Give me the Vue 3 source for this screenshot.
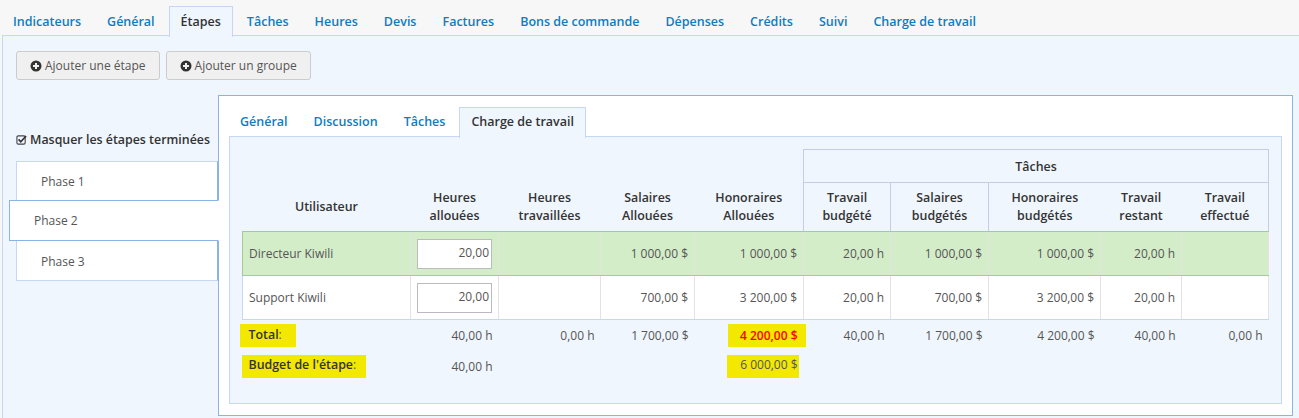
<template>
  <div class="page">
    <ul class="tabs main-tabs">
      <li v-for="t in mainTabs" :key="t" :class="{ active: t === 'Étapes' }">{{ t }}</li>
    </ul>

    <div class="main-panel">
      <div class="actions">
        <button class="btn" v-for="b in buttons" :key="b">
          <svg class="plus" viewBox="0 0 12 12" width="12" height="12">
            <circle cx="6" cy="6" r="5.5" fill="#333" />
            <path d="M6 3v6M3 6h6" stroke="#f0f0f0" stroke-width="2" />
          </svg>
          {{ b }}
        </button>
      </div>

      <div class="workspace">
        <div class="sidebar">
          <label class="hide-done">
            <svg class="check" viewBox="0 0 12 12" width="11" height="11">
              <rect x="1" y="2" width="9" height="9" rx="1.5" fill="none" stroke="#444" stroke-width="1.2" />
              <path d="M2.8 5.8l2.4 2.6L11 2.2" fill="none" stroke="#333" stroke-width="1.8" />
            </svg>
            Masquer les étapes terminées
          </label>
          <div
            v-for="p in phases"
            :key="p"
            class="phase"
            :class="{ active: p === 'Phase 2' }"
          >{{ p }}</div>
        </div>

        <div class="detail">
          <ul class="tabs sub-tabs">
            <li v-for="t in subTabs" :key="t" :class="{ active: t === 'Charge de travail' }">{{ t }}</li>
          </ul>

          <div class="sub-panel">
            <table>
              <colgroup>
                <col v-for="w in colWidths" :key="w.id" :style="{ width: w.px + 'px' }" />
              </colgroup>
              <thead>
                <tr class="group-row">
                  <th colspan="5" class="blank"></th>
                  <th colspan="5" class="group">Tâches</th>
                </tr>
                <tr class="head-row">
                  <th>Utilisateur</th>
                  <th>Heures<br />allouées</th>
                  <th>Heures<br />travaillées</th>
                  <th>Salaires<br />Allouées</th>
                  <th>Honoraires<br />Allouées</th>
                  <th class="line-l">Travail<br />budgété</th>
                  <th class="line-l">Salaires<br />budgétés</th>
                  <th class="line-l">Honoraires<br />budgétés</th>
                  <th>Travail<br />restant</th>
                  <th class="line-r">Travail<br />effectué</th>
                </tr>
              </thead>
              <tbody>
                <tr v-for="r in rows" :key="r.name" :class="{ selected: r.selected }">
                  <td class="name">{{ r.name }}</td>
                  <td class="input-cell"><input class="hours" :value="r.hours" /></td>
                  <td></td>
                  <td>{{ r.salary }}</td>
                  <td>{{ r.fees }}</td>
                  <td>{{ r.budgetHours }}</td>
                  <td>{{ r.budgetSalary }}</td>
                  <td>{{ r.budgetFees }}</td>
                  <td>{{ r.left }}</td>
                  <td></td>
                </tr>
              </tbody>
              <tfoot>
                <tr class="total-row">
                  <td class="name"><span class="mark mark-total"><b>Total</b>:</span></td>
                  <td>40,00 h</td>
                  <td>0,00 h</td>
                  <td>1 700,00 $</td>
                  <td><span class="mark mark-red">4 200,00 $</span></td>
                  <td>40,00 h</td>
                  <td>1 700,00 $</td>
                  <td>4 200,00 $</td>
                  <td>40,00 h</td>
                  <td>0,00 h</td>
                </tr>
                <tr class="budget-row">
                  <td class="name"><span class="mark mark-budget"><b>Budget de l'étape</b>:</span></td>
                  <td>40,00 h</td>
                  <td></td>
                  <td></td>
                  <td><span class="mark mark-amount">6 000,00 $</span></td>
                  <td colspan="5"></td>
                </tr>
              </tfoot>
            </table>
          </div>
        </div>
      </div>
    </div>
  </div>
</template>

<script setup>
const mainTabs = ['Indicateurs', 'Général', 'Étapes', 'Tâches', 'Heures', 'Devis', 'Factures', 'Bons de commande', 'Dépenses', 'Crédits', 'Suivi', 'Charge de travail']
const subTabs = ['Général', 'Discussion', 'Tâches', 'Charge de travail']
const buttons = ['Ajouter une étape', 'Ajouter un groupe']
const phases = ['Phase 1', 'Phase 2', 'Phase 3']

const colWidths = [168, 88, 102, 94, 109, 87, 98, 112, 81, 87].map((px, id) => ({ id, px }))

const rows = [
  { name: 'Directeur Kiwili', hours: '20,00', salary: '1 000,00 $', fees: '1 000,00 $', budgetHours: '20,00 h', budgetSalary: '1 000,00 $', budgetFees: '1 000,00 $', left: '20,00 h', selected: true },
  { name: 'Support Kiwili', hours: '20,00', salary: '700,00 $', fees: '3 200,00 $', budgetHours: '20,00 h', budgetSalary: '700,00 $', budgetFees: '3 200,00 $', left: '20,00 h', selected: false }
]
</script>

<style>
html, body {
  margin: 0;
  background: #f7f7f7;
  overflow: hidden;
}
</style>

<style scoped>
.page {
  height: 418px;
  overflow: hidden;
  font-family: "Open Sans", "Noto Sans", sans-serif;
  font-size: 12px;
  color: #555;
}

.tabs {
  display: flex;
  gap: 2px;
  list-style: none;
  margin: 0;
  font-size: 12.5px;
  font-weight: 600;
  color: #0f7cc0;
}
.tabs li {
  height: 29px;
  line-height: 29px;
  padding: 0 11px;
  border: 1px solid transparent;
  border-bottom: 0;
  white-space: nowrap;
}
.tabs li.active {
  color: #333;
  background: #eff6fe;
  border-color: #c6d6f6;
  height: 30px;
  margin-bottom: -1px;
  position: relative;
}
.main-tabs {
  padding: 6px 0 0 1px;
  height: 29px;
}
.sub-tabs {
  padding: 11px 0 0 9px;
  height: 29px;
}
.sub-tabs li {
  line-height: 27px;
}

.main-panel {
  margin-left: 2px;
  border-top: 1px solid #c6d6f6;
  border-left: 1px solid #c6d6f6;
  background: #eff6fe;
  padding: 15px 6px 0 13px;
  height: 400px;
}

.actions {
  display: flex;
  gap: 6px;
  height: 29px;
  margin-bottom: 15px;
}
.btn {
  display: flex;
  align-items: center;
  gap: 3px;
  height: 29px;
  padding: 0 13px;
  font: 12px "Open Sans", "Noto Sans", sans-serif;
  color: #555;
  background: #f0f0f0;
  border: 1px solid #ccc;
  border-radius: 3px;
}

.workspace {
  display: flex;
}
.sidebar {
  width: 202px;
  flex: none;
  padding-top: 34px;
}
.hide-done {
  display: flex;
  align-items: center;
  gap: 3px;
  height: 20px;
  margin-bottom: 12px;
  font-size: 12.4px;
  font-weight: 600;
  color: #333;
  white-space: nowrap;
}
.phase {
  height: 39px;
  line-height: 41px;
  padding-left: 24px;
  background: #fff;
  border: 1px solid #c6d6f6;
  border-right-color: #8ab4e4;
  margin-bottom: -1px;
}
.phase:first-of-type {
  height: 38px;
  line-height: 39px;
}
.phase.active {
  position: relative;
  z-index: 1;
  margin: 0 -1px -1px -7px;
  height: 39px;
  line-height: 39px;
  border-color: #8ab4e4;
  border-right-color: #fff;
}

.detail {
  flex: 1;
  background: #fff;
  border: 1px solid #8ab4e4;
  padding: 0 10px 11px;
  margin-left: 0;
}
.sub-tabs {
  margin: 0 -10px;
}
.sub-panel {
  background: #eff6fe;
  border: 1px solid #c6d6f6;
  padding: 12px 12px 22px;
}

table {
  table-layout: fixed;
  border-collapse: collapse;
  width: 1026px;
}
th {
  font-size: 12.4px;
  font-weight: 600;
  color: #333;
  text-align: center;
  padding: 0 4px;
}
.group-row th {
  height: 32px;
}
.group {
  border: 1px solid #c8cbe2;
}
.head-row th {
  height: 48px;
  line-height: 18px;
  border-bottom: 1px solid #a2cc90;
}
.line-l {
  border-left: 1px solid #c8cbe2;
}
.line-r {
  border-right: 1px solid #c8cbe2;
}

td {
  text-align: right;
  padding: 0 6px;
  white-space: nowrap;
}
td.name {
  text-align: left;
}
tbody td {
  height: 43px;
  background: #fff;
  border: 1px solid #e3e3e3;
  border-bottom-color: #c6d6f6;
}
tbody td:first-child {
  border-left-color: #c6d6f6;
  padding-left: 6px;
}
tbody tr.selected td {
  background: #d4edc9;
  border-top-color: #a2cc90;
  border-bottom-color: #a2cc90;
}
tbody tr.selected td:first-child {
  border-left-color: #a2cc90;
}
.hours {
  display: block;
  box-sizing: border-box;
  width: 75px;
  height: 30px;
  margin-left: 0;
  padding: 0 2px 2px 0;
  border: 1px solid #bbb;
  background: #fff;
  font: 12px "Open Sans", "Noto Sans", sans-serif;
  color: #555;
  text-align: right;
  outline: none;
}

.total-row td {
  height: 31px;
}
.budget-row td {
  height: 30px;
}
.mark {
  display: inline-block;
  line-height: 23px;
  background: #f2e800;
}
.mark b {
  font-size: 12.4px;
  font-weight: 600;
  color: #333;
}
.mark-total {
  width: 47px;
  margin-left: -9px;
  padding: 0 0 2px 9px;
  line-height: 21px;
}
.mark-budget {
  width: 117px;
  margin-left: -7px;
  padding: 0 0 4px 7px;
  line-height: 19px;
}
.mark-red {
  margin-right: -8px;
  padding: 0 8px 0 12px;
  color: #f00;
  font-weight: 600;
}
.mark-amount {
  margin-right: -1px;
  padding: 0 1px 4px 13px;
  line-height: 19px;
}
</style>
